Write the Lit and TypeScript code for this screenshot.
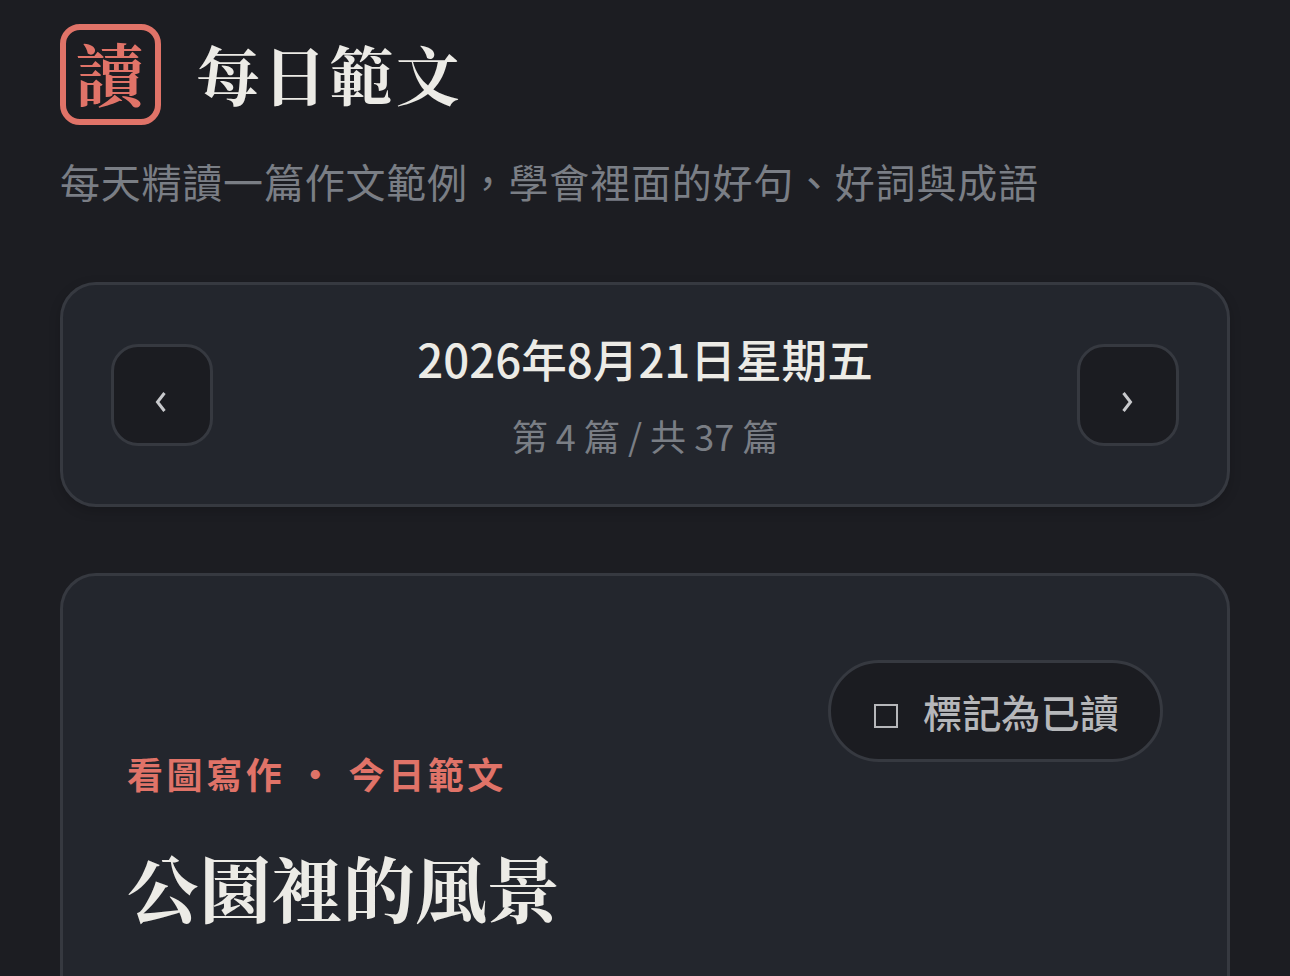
import { LitElement, html, css } from "lit";
import { customElement } from "lit/decorators.js";

@customElement("app-root")
export class AppRoot extends LitElement {
  static styles = css`
    :host {
      display: block;
      height: 976px;
      overflow: hidden;
      background: #1c1d22;
      --sans: "Noto Sans CJK TC", "Noto Sans", sans-serif;
      --serif: "Noto Serif CJK TC", "Noto Sans CJK TC", serif;
      font-family: var(--sans);
    }
    .page { padding: 24px 60px 0; }
    .brand { display: flex; align-items: center; gap: 37px; height: 101px; }
    .seal {
      box-sizing: border-box; width: 101px; height: 101px;
      border: 6px solid #e07368; border-radius: 20px;
      display: flex; align-items: center; justify-content: center;
      color: #e07368; font-family: var(--serif); font-size: 68px; font-weight: 700; line-height: 1;
      padding: 0 2px 6px 0;
    }
    .title {
      margin: -6px 0 0 -2px; color: #ecebe6; font-family: var(--serif);
      font-size: 64px; font-weight: 700; letter-spacing: 2.6px; line-height: 1;
    }
    .sub {
      margin: 30px 0 0; color: #7a7e85; font-size: 40px; letter-spacing: 0.78px;
      line-height: 52px; height: 52px;
    }
    .nav {
      box-sizing: border-box; margin-top: 75px; height: 225px;
      background: #23262d; border: 3px solid #363940; border-radius: 36px;
      box-shadow: 0 4px 12px rgba(0,0,0,.18);
      display: flex; align-items: center; justify-content: space-between; padding: 0 48px;
    }
    .arrow {
      box-sizing: border-box; width: 102px; height: 102px; flex: none;
      background: #1b1c21; border: 3px solid #363940; border-radius: 27px;
      display: flex; align-items: center; justify-content: center;
    }
    .arrow svg { width: 12px; height: 22px; margin: 14px 2px 0 0; }
    .arrow path { fill: none; stroke: #c8c9cc; stroke-width: 3; }
    .date { text-align: center; }
    .date-main { color: #ecebe6; font-size: 45.6px; font-weight: 500; line-height: 60px; margin-top: -2px; }
    .date-sub { margin-top: 23px; color: #7a7e85; font-size: 36px; line-height: 48px; letter-spacing: 0; }
    .card {
      box-sizing: border-box; margin-top: 66px; height: 500px;
      background: #23262d; border: 3px solid #363940; border-radius: 36px;
      padding: 84px 64px 0;
    }
    .row { display: flex; justify-content: flex-end; }
    .mark {
      box-sizing: border-box; width: 335px; height: 102px;
      background: #1b1c21; border: 3px solid #363940; border-radius: 51px;
      display: flex; align-items: center; gap: 25px; padding-left: 43px;
      color: #b6b7ba; font-size: 39.2px; font-weight: 500; letter-spacing: 0;
    }
    .box { box-sizing: border-box; width: 24px; height: 24px; border: 2.5px solid #b6b7ba; margin-top: 10px; }
    .kicker {
      margin: -13px 0 0; color: #e07368; font-size: 36px; font-weight: 700;
      letter-spacing: 3.6px; line-height: 48px; white-space: pre;
    }
    .headline {
      margin: 43px 0 0; color: #ecebe6; font-family: var(--serif);
      font-size: 72px; font-weight: 700; line-height: 92px;
    }
  `;

  render() {
    return html`
      <div class="page">
        <header class="brand">
          <div class="seal">讀</div>
          <h1 class="title">每日範文</h1>
        </header>
        <p class="sub">每天精讀一篇作文範例，學會裡面的好句、好詞與成語</p>
        <section class="nav">
          <div class="arrow"><svg viewBox="0 0 12 22"><path d="M9.5 2 2.5 11l7 9"/></svg></div>
          <div class="date">
            <div class="date-main">2026年8月21日星期五</div>
            <div class="date-sub">第 4 篇 / 共 37 篇</div>
          </div>
          <div class="arrow"><svg viewBox="0 0 12 22"><path d="M2.5 2l7 9-7 9"/></svg></div>
        </section>
        <article class="card">
          <div class="row">
            <div class="mark"><span class="box"></span><span>標記為已讀</span></div>
          </div>
          <p class="kicker">看圖寫作 ・ 今日範文</p>
          <h2 class="headline">公園裡的風景</h2>
        </article>
      </div>
    `;
  }
}
